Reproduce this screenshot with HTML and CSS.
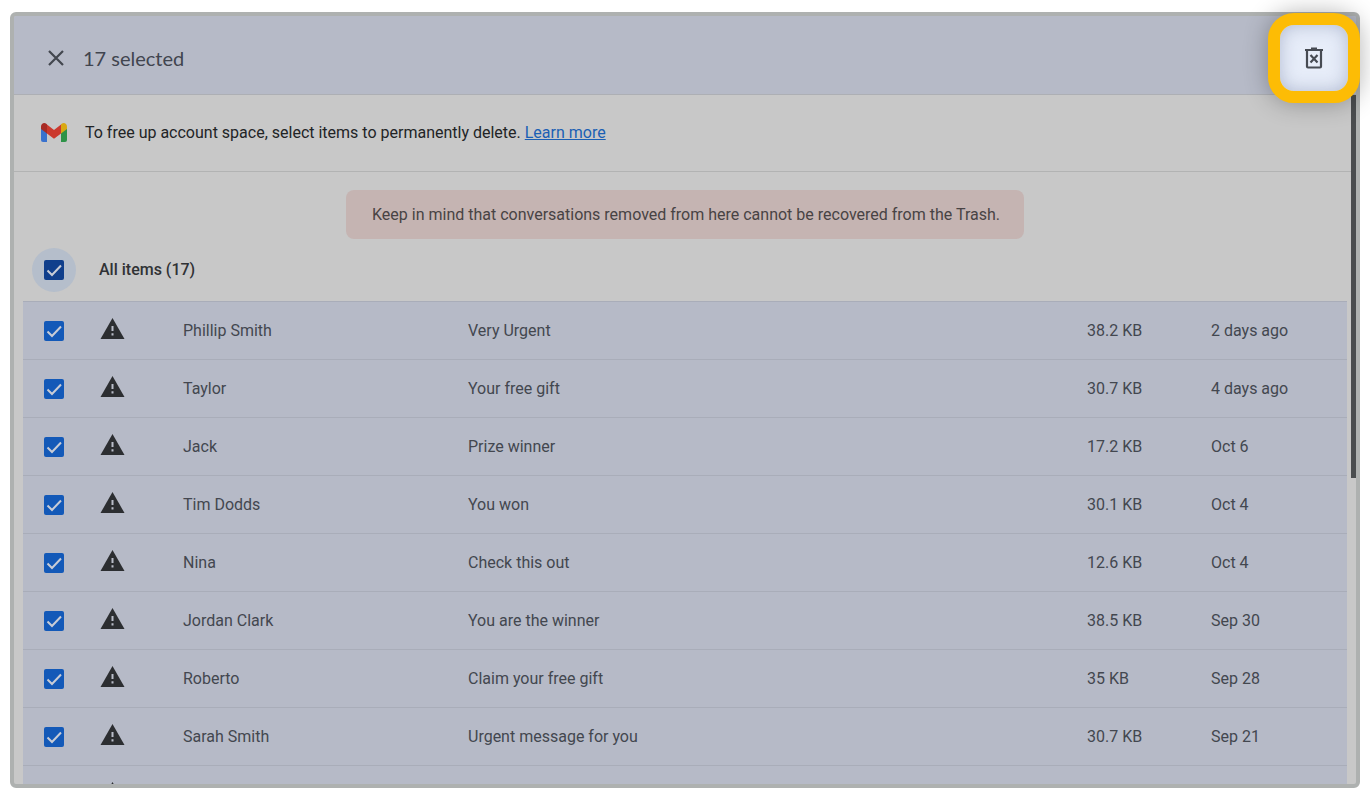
FILE: index.html
```html
<!DOCTYPE html>
<html lang="en">
<head>
  <meta charset="UTF-8">
  <title>Free up account space</title>
  <link rel="stylesheet" href="styles.css">
</head>
<body>

<svg class="sprite" aria-hidden="true">
  <symbol id="warning" viewBox="0 0 24 22">
    <path fill="currentColor" d="M12 0L24 21H0z"/>
    <path fill="#b9bdc9" d="M11 8h2v5h-2zM11 15.300h2v2.200h-2z"/>
  </symbol>
</svg>

<main class="window">
  <div class="panel">
    <header class="toolbar">
      <button class="close" aria-label="Clear selection">
        <svg width="16" height="16" viewBox="0 0 16 16"><path d="M1 1L15 15M15 1L1 15" stroke="currentColor" stroke-width="2.200"/></svg>
      </button>
      <h1>17 selected</h1>
    </header>

    <div class="intro">
      <svg class="gmail" width="26" height="20" viewBox="0 0 26 20">
        <path fill="#3972ce" d="M0 5l6 4.500V19H2Q0 19 0 17z"/>
        <path fill="#2e9348" d="M26 5l-6 4.500V19h4q2 0 2-2z"/>
        <path fill="#cb392e" d="M5.300 1l7.700 6 7.700-6v9L13 15.800 5.300 10z"/>
        <path fill="#a72b25" d="M0 3.500C0 .5 3.300-.8 5.300.8L6 1.500v9L0 6z"/>
        <path fill="#d9a812" d="M26 3.500c0-3-3.300-4.300-5.300-2.700l-.7.700v9L26 6z"/>
      </svg>
      <p>To free up account space, select items to permanently delete. <a href="#">Learn more</a></p>
    </div>

    <p class="notice">Keep in mind that conversations removed from here cannot be recovered from the Trash.</p>

    <div class="select-all">
      <span class="halo"><input type="checkbox" id="all" checked></span>
      <label for="all">All items (17)</label>
    </div>

    <table class="items">
      <colgroup>
        <col class="col-check"><col class="col-icon"><col class="col-name"><col><col class="col-size"><col class="col-date">
      </colgroup>
      <tbody>
        <tr>
          <td><input type="checkbox" aria-label="Select Phillip Smith" checked></td>
          <td><svg class="warning"><use href="#warning"/></svg></td>
          <td>Phillip Smith</td><td>Very Urgent</td><td>38.2 KB</td><td>2 days ago</td>
        </tr>
        <tr>
          <td><input type="checkbox" aria-label="Select Taylor" checked></td>
          <td><svg class="warning"><use href="#warning"/></svg></td>
          <td>Taylor</td><td>Your free gift</td><td>30.7 KB</td><td>4 days ago</td>
        </tr>
        <tr>
          <td><input type="checkbox" aria-label="Select Jack" checked></td>
          <td><svg class="warning"><use href="#warning"/></svg></td>
          <td>Jack</td><td>Prize winner</td><td>17.2 KB</td><td>Oct 6</td>
        </tr>
        <tr>
          <td><input type="checkbox" aria-label="Select Tim Dodds" checked></td>
          <td><svg class="warning"><use href="#warning"/></svg></td>
          <td>Tim Dodds</td><td>You won</td><td>30.1 KB</td><td>Oct 4</td>
        </tr>
        <tr>
          <td><input type="checkbox" aria-label="Select Nina" checked></td>
          <td><svg class="warning"><use href="#warning"/></svg></td>
          <td>Nina</td><td>Check this out</td><td>12.6 KB</td><td>Oct 4</td>
        </tr>
        <tr>
          <td><input type="checkbox" aria-label="Select Jordan Clark" checked></td>
          <td><svg class="warning"><use href="#warning"/></svg></td>
          <td>Jordan Clark</td><td>You are the winner</td><td>38.5 KB</td><td>Sep 30</td>
        </tr>
        <tr>
          <td><input type="checkbox" aria-label="Select Roberto" checked></td>
          <td><svg class="warning"><use href="#warning"/></svg></td>
          <td>Roberto</td><td>Claim your free gift</td><td>35 KB</td><td>Sep 28</td>
        </tr>
        <tr>
          <td><input type="checkbox" aria-label="Select Sarah Smith" checked></td>
          <td><svg class="warning"><use href="#warning"/></svg></td>
          <td>Sarah Smith</td><td>Urgent message for you</td><td>30.7 KB</td><td>Sep 21</td>
        </tr>
        <tr>
          <td></td>
          <td><svg class="warning"><use href="#warning"/></svg></td>
          <td></td><td></td><td></td><td></td>
        </tr>
      </tbody>
    </table>
    <div class="scroll-thumb"></div>
  </div>

  <button class="delete" aria-label="Delete permanently">
    <svg width="20" height="22" viewBox="0 0 20 22" fill="none" stroke="currentColor" stroke-width="2.200">
      <path d="M1 3H19M7 1.500H13M3 3V19.500Q3 20.500 4 20.500H16Q17 20.500 17 19.500V3M6.500 8L13.500 15.500M13.500 8L6.500 15.500"/>
    </svg>
  </button>
</main>

</body>
</html>
```

FILE: styles.css
```css
* {
  box-sizing: border-box;
}

body {
  margin: 0;
  height: 100vh;
  padding: 12px 10px;
  background: #fff;
  font-family: Roboto, sans-serif;
  font-size: 16px;
  line-height: 24px;
  color: #43474f;
  overflow: hidden;
}

h1, p {
  margin: 0;
}

button {
  padding: 0;
  border: none;
  background: none;
  cursor: pointer;
}

.sprite {
  display: none;
}

.window {
  position: relative;
  height: 100%;
}

.panel {
  position: relative;
  height: 100%;
  border: 4px solid #aeb1b0;
  border-radius: 6px;
  background: #c8c8c8;
  overflow: hidden;
}

.toolbar {
  display: flex;
  align-items: center;
  gap: 19px;
  height: 79px;
  padding: 6px 34px 0;
  background: #b6bac7;
  border-bottom: 1px solid #adafb4;
}

.close {
  display: flex;
  color: #43474f;
}

.toolbar h1 {
  font-family: Lato, sans-serif;
  font-size: 20px;
  font-weight: 400;
  color: #41454f;
}

.intro {
  display: flex;
  align-items: center;
  gap: 18px;
  height: 77px;
  padding: 0 27px;
  border-bottom: 1px solid #b2b3b3;
  color: #222426;
}

.intro a {
  color: #1a5fb4;
}

.notice {
  width: fit-content;
  margin: 18px auto 0;
  padding: 13px 24px 12px 26px;
  border-radius: 8px;
  background: #c5b4b2;
  color: #484344;
}

.select-all {
  display: flex;
  align-items: center;
  gap: 23px;
  height: 62px;
  padding-left: 18px;
  color: #303235;
  font-weight: 500;
}

.halo {
  display: flex;
  align-items: center;
  justify-content: center;
  width: 44px;
  height: 44px;
  border-radius: 50%;
  background: #b5becb;
}

input[type="checkbox"] {
  appearance: none;
  display: block;
  width: 20px;
  height: 20px;
  margin: 0;
  border-radius: 2px;
  background: #1359b8 url("data:image/svg+xml,%3Csvg xmlns='http://www.w3.org/2000/svg' viewBox='0 0 20 20'%3E%3Cpath d='M3.500 10.500L8 15L17 5.500' fill='none' stroke='%23c8ccd6' stroke-width='2'/%3E%3C/svg%3E");
}

.halo input[type="checkbox"] {
  background-color: #103f8c;
}

.items {
  width: calc(100% - 18px);
  margin-left: 9px;
  table-layout: fixed;
  border-collapse: separate;
  border-spacing: 0;
  background: #b6bac7;
}

.items td {
  height: 58px;
  padding: 0;
  border-top: 1px solid #a9adb9;
  vertical-align: middle;
}

.items td:first-child {
  padding-left: 21px;
}

.col-check {
  width: 77px;
}

.col-icon {
  width: 83px;
}

.col-name {
  width: 285px;
}

.col-size {
  width: 124px;
}

.col-date {
  width: 136px;
}

.warning {
  display: block;
  width: 25px;
  height: 22px;
  margin-bottom: 4px;
  color: #2c2e31;
}

.scroll-thumb {
  position: absolute;
  top: 79px;
  right: 0;
  width: 5px;
  height: 383px;
  background: #4a4d4f;
}

.delete {
  position: absolute;
  top: 1px;
  right: 0;
  display: flex;
  align-items: center;
  justify-content: center;
  width: 92px;
  height: 90px;
  border: 12px solid #fdbc05;
  border-radius: 26px;
  background: #e7edf9;
  box-shadow: 0 0 24px rgba(0, 0, 0, 0.3), inset 0 0 18px rgba(110, 125, 160, 0.45);
  color: #474b53;
}
```
